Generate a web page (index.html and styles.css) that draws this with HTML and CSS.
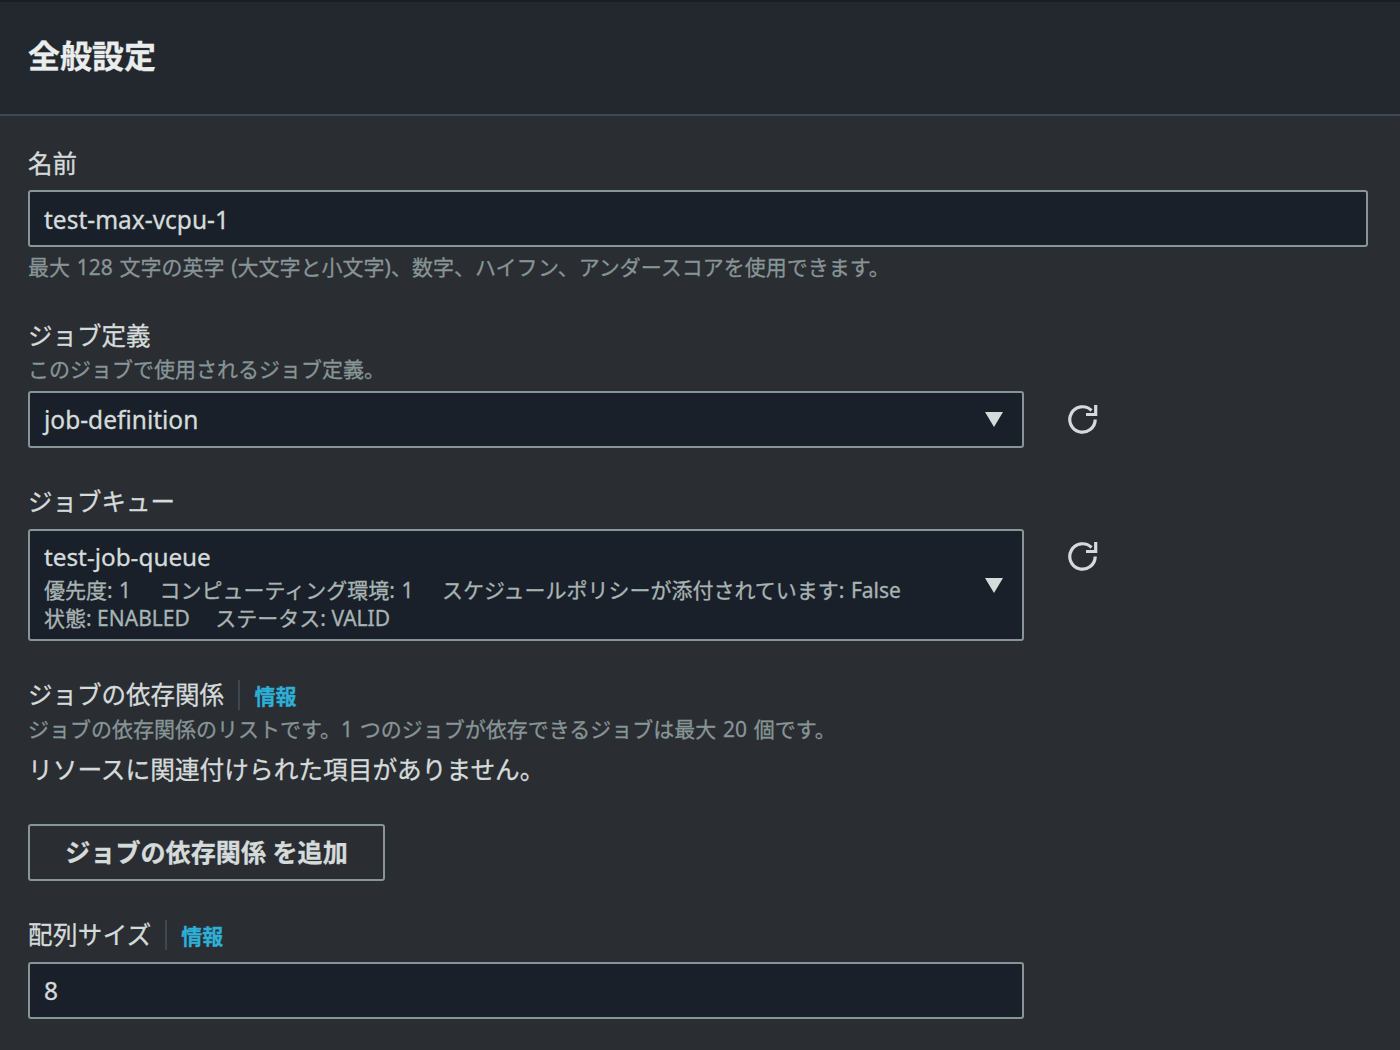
FILE: index.html
```html
<!DOCTYPE html>
<html lang="ja">
<head>
<meta charset="utf-8">
<title>全般設定</title>
<link rel="stylesheet" href="styles.css">
</head>
<body>
<div class="panel">
  <header class="panel-head"><h2 class="panel-title">全般設定</h2></header>
  <div class="panel-body">
    <section class="field field-name">
      <div class="label">名前</div>
      <div class="box box-full">test-max-vcpu-1</div>
      <div class="hint hint-below">最大 128 文字の英字 (大文字と小文字)、数字、ハイフン、アンダースコアを使用できます。</div>
    </section>
    <section class="field field-def">
      <div class="label">ジョブ定義</div>
      <div class="hint hint-above">このジョブで使用されるジョブ定義。</div>
      <div class="select-row">
        <div class="box box-wide box-select">
          <span>job-definition</span>
          <svg class="caret" viewBox="0 0 18 15"><path d="M0 0H18L9 15Z"/></svg>
        </div>
        <svg class="refresh" viewBox="0 0 30 30"><path d="M27.2 14.5A12.7 12.7 0 1 1 23.5 5.5"/><path d="M27.7 0V9.5H18"/></svg>
      </div>
    </section>
    <section class="field field-queue">
      <div class="label">ジョブキュー</div>
      <div class="select-row">
        <div class="box box-wide box-select box-tall">
          <div class="option">
            <div class="option-main">test-job-queue</div>
            <div class="option-tags"><span>優先度: 1</span><span>コンピューティング環境: 1</span><span>スケジュールポリシーが添付されています: False</span></div>
            <div class="option-tags option-tags-second"><span>状態: ENABLED</span><span>ステータス: VALID</span></div>
          </div>
          <svg class="caret" viewBox="0 0 18 15"><path d="M0 0H18L9 15Z"/></svg>
        </div>
        <svg class="refresh" viewBox="0 0 30 30"><path d="M27.2 14.5A12.7 12.7 0 1 1 23.5 5.5"/><path d="M27.7 0V9.5H18"/></svg>
      </div>
    </section>
    <section class="field field-dep">
      <div class="label-row"><span class="label">ジョブの依存関係</span><a class="info">情報</a></div>
      <div class="hint hint-above">ジョブの依存関係のリストです。1 つのジョブが依存できるジョブは最大 20 個です。</div>
      <div class="empty">リソースに関連付けられた項目がありません。</div>
      <button class="btn">ジョブの依存関係 を追加</button>
    </section>
    <section class="field field-array">
      <div class="label-row"><span class="label">配列サイズ</span><a class="info">情報</a></div>
      <div class="box box-wide box-number">8</div>
    </section>
  </div>
</div>
</body>
</html>
```
FILE: styles.css
```css
* { box-sizing: border-box; }
html, body { margin: 0; height: 100%; overflow: hidden; }
body {
  background: #2a2d32;
  color: #d5dbdb;
  font-family: "Noto Sans", "Noto Sans CJK JP", sans-serif;
  font-size: 24.5px;
  -webkit-text-stroke: 0.3px;
}
.panel { border-top: 2px solid #1a1e24; }
.panel-head {
  height: 114px;
  background: #23272e;
  border-bottom: 2px solid #414750;
  padding: 0 28px;
  display: flex;
  align-items: center;
}
.panel-title { margin: -4px 0 0; font-size: 32px; font-weight: 700; color: #eaeded; line-height: 1.3; }
.panel-body { padding: 30px 28px 0 28px; }
.label { line-height: 36px; color: #d5dbdb; font-size: 24.5px; }
.label-row { display: flex; align-items: center; height: 36px; }
.label-row .label { padding-right: 14px; border-right: 2px solid #414750; line-height: 30px; height: 30px; display: flex; align-items: center; }
.field-array .label-row .label { letter-spacing: 0.4px; padding-right: 13px; }
.info { color: #2eb0d6; font-size: 21px; font-weight: 700; margin-left: 14.5px; }
.hint { font-size: 21px; word-spacing: 1.3px; color: #879596; line-height: 30px; }
.box {
  background: #1a2029;
  border: 2px solid #879596;
  border-radius: 3px;
  height: 57px;
  padding: 0 14px;
  display: flex;
  align-items: center;
  color: #d5dbdb;
  font-size: 24.5px;
}
.box-full { width: 1340px; margin-top: 8px; padding-top: 1px; }
.box-wide { width: 996px; }
.box-select { justify-content: space-between; padding-right: 19px; }
.box-tall { height: 112px; }
.hint-below { margin-top: 5px; }
.hint-above { margin-top: 1px; }
.select-row { display: flex; align-items: flex-start; gap: 44px; }
.caret { width: 18px; height: 15px; fill: #d5dbdb; flex: none; }
.refresh { width: 30px; height: 30px; fill: none; stroke: #d5dbdb; stroke-width: 3.2px; margin-top: 14px; flex: none; }
.field-def { margin-top: 36px; }
.field-def .hint-above { margin-top: 0; }
.field-def .select-row { margin-top: 7px; }
.field-queue { margin-top: 36px; }
.field-queue .select-row { margin-top: 9px; }
.field-queue .refresh { margin-top: 13px; }
.field-dep { margin-top: 36px; }
.option { align-self: flex-start; padding-top: 11px; }
.option-main { line-height: 30px; font-size: 24.3px; margin-bottom: 4px; }
.option-tags { font-size: 21px; word-spacing: 1px; line-height: 28px; color: #a8b4b4; display: flex; gap: 28.5px; }
.option-tags-second { word-spacing: 0; gap: 25.5px; }
.empty { margin-top: 8px; line-height: 36px; font-size: 24.7px; color: #d5dbdb; }
.btn {
  display: flex; align-items: center; justify-content: center;
  margin-top: 36px;
  width: 357px; height: 57px;
  padding: 0 0 3px;
  background: transparent;
  border: 2px solid #879596;
  border-radius: 3px;
  color: #d5dbdb;
  font-family: inherit;
  font-size: 25.1px;
  font-weight: 700;
}
.field-array { margin-top: 36px; }
.field-array .box { margin-top: 9px; }
```
